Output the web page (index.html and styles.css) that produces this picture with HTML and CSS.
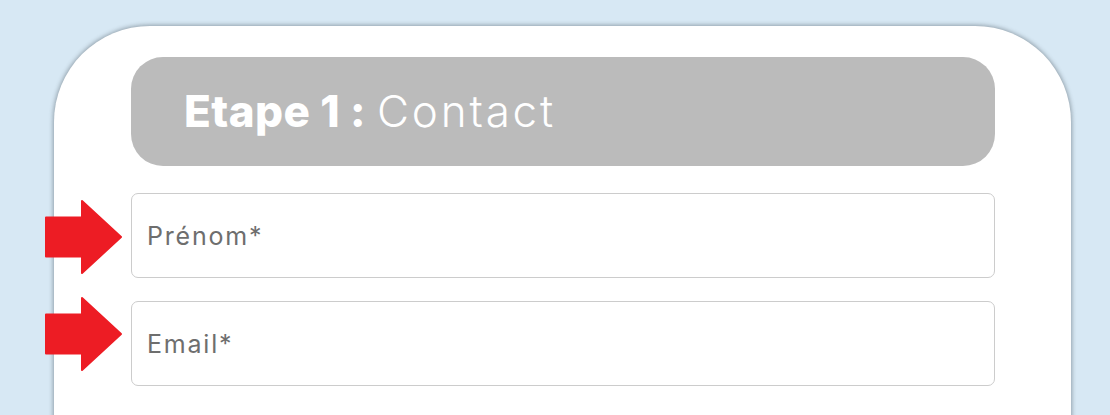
FILE: index.html
```html
<!DOCTYPE html>
<html lang="fr">
<head>
<meta charset="utf-8">
<title>Etape 1 : Contact</title>
<link rel="stylesheet" href="styles.css">
</head>
<body>
<main class="card">
  <h1 class="step-title"><strong>Etape 1 :</strong> Contact</h1>
  <form class="form">
    <div class="field field--first">
      <svg class="arrow" viewBox="0 0 78 75" aria-hidden="true"><polygon points="1,17.5 37,17.5 37,1 76,37 37,73 37,56.5 1,56.5" fill="#ed1c24" stroke="#ed1c24" stroke-width="2" stroke-linejoin="round"/></svg>
      <input class="input" type="text" placeholder="Prénom*">
    </div>
    <div class="field field--second">
      <svg class="arrow" viewBox="0 0 78 75" aria-hidden="true"><polygon points="1,17.5 37,17.5 37,1 76,37 37,73 37,56.5 1,56.5" fill="#ed1c24" stroke="#ed1c24" stroke-width="2" stroke-linejoin="round"/></svg>
      <input class="input" type="email" placeholder="Email*">
    </div>
  </form>
</main>
</body>
</html>
```

FILE: styles.css
```css
html, body {
  margin: 0;
  padding: 0;
}
body {
  background: #d7e8f4;
  font-family: "Inter", "Open Sans", sans-serif;
  height: 415px;
  overflow: hidden;
  padding-top: 26px;
  box-sizing: border-box;
}
.card {
  margin-left: 54px;
  width: 1017px;
  height: 500px;
  background: #ffffff;
  border-radius: 96px 96px 0 0;
  box-shadow: 0 0 4px 1px rgba(60, 70, 80, 0.45);
  padding: 31px 76px 0 77px;
  box-sizing: border-box;
}
.step-title {
  margin: 0;
  height: 109px;
  background: #bbbbbb;
  border-radius: 32px;
  color: #ffffff;
  font-size: 44px;
  font-weight: 300;
  display: flex;
  align-items: center;
  gap: 11px;
  padding-left: 53px;
  padding-bottom: 2px;
  box-sizing: border-box;
  letter-spacing: 2.8px;
}
.step-title strong {
  font-weight: 800;
  letter-spacing: 0.4px;
}
.form {
  display: flex;
  flex-direction: column;
  gap: 23px;
  margin-top: 27px;
}
.field {
  position: relative;
}
.input {
  display: block;
  width: 100%;
  height: 85px;
  box-sizing: border-box;
  border: 1px solid #cccccc;
  border-radius: 7px;
  padding: 0 15px;
  font-family: inherit;
  font-size: 25px;
  letter-spacing: 1.8px;
  color: #666666;
  background: #ffffff;
  outline: none;
}
.input::placeholder {
  color: #6e6e6e;
  opacity: 1;
}
.arrow {
  position: absolute;
  left: -86px;
  width: 78px;
  height: 75px;
}
.field--first .arrow {
  top: 7px;
}
.field--second .arrow {
  top: -4px;
}
```
